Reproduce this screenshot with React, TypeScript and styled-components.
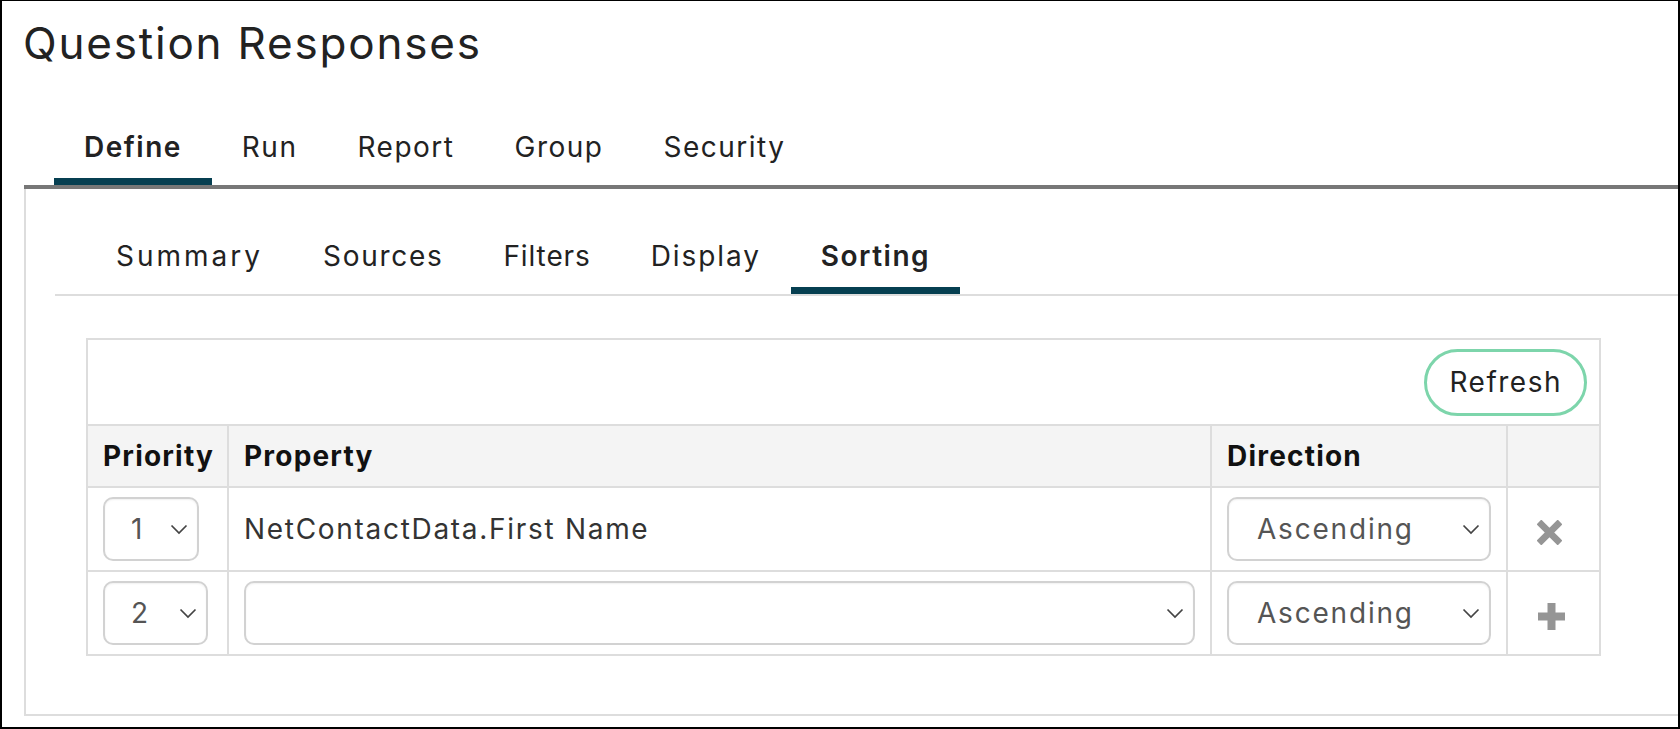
import React from "react";
import styled, { createGlobalStyle } from "styled-components";

const GlobalStyle = createGlobalStyle`
  html, body { margin: 0; padding: 0; background: #fff; }
  body { font-family: Inter, "Noto Sans", sans-serif; color: #222; }
  * { box-sizing: border-box; }
`;

const Frame = styled.div`
  height: 729px;
  border: 2px solid #000;
  border-top-width: 1px;
  overflow: hidden;
  display: flex;
  flex-direction: column;
`;

const Title = styled.h1`
  margin: 0;
  padding: 14px 0 0 21px;
  font-size: 44px;
  font-weight: 400;
  line-height: 56px;
  color: #222;
  letter-spacing: 1.8px;
`;

const MainTabBar = styled.nav`
  display: flex;
  margin: 59px 0 0 22px;
  padding-left: 30px;
  border-bottom: 4px solid #777;
`;

const SubTabBar = styled.nav`
  display: flex;
  margin: 50px 0 0 29px;
  padding-left: 31px;
  border-bottom: 2px solid #ddd;
`;

const Tab = styled.div<{ $active?: boolean; $spacing?: number }>`
  padding: 0 30px 14px;
  font-size: 28px;
  line-height: 34px;
  letter-spacing: ${(p) => p.$spacing ?? 1.5}px;
  font-weight: ${(p) => (p.$active ? 600 : 400)};
  color: #222;
  border-bottom: 7px solid ${(p) => (p.$active ? "#063f51" : "transparent")};
  white-space: nowrap;
`;

const Panel = styled.section`
  height: 527px;
  margin: 0 -6px 0 22px;
  border: 2px solid #ddd;
  border-top: none;
  display: flex;
  flex-direction: column;
`;

const SortGrid = styled.div`
  margin: 42px 0 0 60px;
  width: 1515px;
  border: 2px solid #ddd;
  display: grid;
  grid-template-columns: 141px 983px 296px 1fr;
`;

const Toolbar = styled.div`
  grid-column: 1 / -1;
  height: 86px;
  border-bottom: 2px solid #ddd;
  display: flex;
  align-items: center;
  justify-content: flex-end;
  padding-right: 12px;
`;

const RefreshButton = styled.button`
  height: 67px;
  padding: 0 22px;
  border: 3px solid #7dd5ab;
  border-radius: 34px;
  background: #fff;
  font-family: inherit;
  font-size: 28px;
  letter-spacing: 1.5px;
  color: #222;
  cursor: pointer;
`;

const Cell = styled.div<{ $head?: boolean; $last?: boolean; $h: number }>`
  height: ${(p) => p.$h}px;
  display: flex;
  align-items: center;
  padding: 0 15px;
  border-bottom: 2px solid #ddd;
  border-right: ${(p) => (p.$last ? "none" : "2px solid #ddd")};
  background: ${(p) => (p.$head ? "#f4f4f4" : "#fff")};
  font-size: 28px;
  letter-spacing: ${(p) => (p.$head ? "1.2px" : "1.7px")};
  font-weight: ${(p) => (p.$head ? 700 : 400)};
  color: ${(p) => (p.$head ? "#111" : "#333")};
  white-space: nowrap;
  &:nth-last-child(-n + 4) {
    border-bottom: none;
  }
`;

const ActionCell = styled(Cell)`
  padding: 6px 0 0 29px;
`;

const SelectBox = styled.div<{ $w?: number; $pad: number }>`
  width: ${(p) => (p.$w ? `${p.$w}px` : "100%")};
  height: 64px;
  display: flex;
  align-items: center;
  justify-content: space-between;
  padding: 0 9px 0 ${(p) => p.$pad}px;
  border: 2px solid #d2d2d2;
  border-radius: 10px;
  box-shadow: inset 0 1px 2px rgba(0, 0, 0, 0.06);
  background: #fff;
  font-size: 28px;
  letter-spacing: 1.8px;
  color: #555;
`;

const Chevron = () => (
  <svg width="18" height="11" viewBox="0 0 18 11" aria-hidden="true">
    <polyline points="1.5,1.5 9,9 16.5,1.5" fill="none" stroke="#444" strokeWidth="1.7" />
  </svg>
);

const Select = ({ value, width, pad }: { value: string; width?: number; pad: number }) => (
  <SelectBox $w={width} $pad={pad}>
    <span>{value}</span>
    <Chevron />
  </SelectBox>
);

const RemoveIcon = () => (
  <svg width="25" height="25" viewBox="0 0 26 26" aria-hidden="true" style={{ filter: "blur(0.5px)" }}>
    <path d="M4.5 4.5 L21.5 21.5 M21.5 4.5 L4.5 21.5" stroke="#959595" strokeWidth="7" strokeLinecap="square" />
  </svg>
);

const AddIcon = () => (
  <svg width="29" height="29" viewBox="0 0 29 29" aria-hidden="true" style={{ filter: "blur(0.5px)" }}>
    <path d="M14.5 1 V28 M1 14.5 H28" stroke="#959595" strokeWidth="8" />
  </svg>
);

const mainTabs = ["Define", "Run", "Report", "Group", "Security"];

const subTabs: { label: string; spacing: number }[] = [
  { label: "Summary", spacing: 3 },
  { label: "Sources", spacing: 1.7 },
  { label: "Filters", spacing: 0.9 },
  { label: "Display", spacing: 1.9 },
  { label: "Sorting", spacing: 1.5 },
];

export default function App() {
  return (
    <>
      <GlobalStyle />
      <Frame>
        <Title>Question Responses</Title>
        <MainTabBar>
          {mainTabs.map((t) => (
            <Tab key={t} $active={t === "Define"}>
              {t}
            </Tab>
          ))}
        </MainTabBar>
        <Panel>
          <SubTabBar>
            {subTabs.map((t) => (
              <Tab key={t.label} $active={t.label === "Sorting"} $spacing={t.spacing}>
                {t.label}
              </Tab>
            ))}
          </SubTabBar>
          <SortGrid>
            <Toolbar>
              <RefreshButton>Refresh</RefreshButton>
            </Toolbar>

            <Cell $head $h={62}>Priority</Cell>
            <Cell $head $h={62}>Property</Cell>
            <Cell $head $h={62}>Direction</Cell>
            <Cell $head $last $h={62} />

            <Cell $h={84}>
              <Select value="1" width={96} pad={26} />
            </Cell>
            <Cell $h={84}>NetContactData.First Name</Cell>
            <Cell $h={84}>
              <Select value="Ascending" pad={28} />
            </Cell>
            <ActionCell $last $h={84}>
              <RemoveIcon />
            </ActionCell>

            <Cell $h={82}>
              <Select value="2" width={105} pad={26} />
            </Cell>
            <Cell $h={82}>
              <Select value="" pad={28} />
            </Cell>
            <Cell $h={82}>
              <Select value="Ascending" pad={28} />
            </Cell>
            <ActionCell $last $h={82}>
              <AddIcon />
            </ActionCell>
          </SortGrid>
        </Panel>
      </Frame>
    </>
  );
}
